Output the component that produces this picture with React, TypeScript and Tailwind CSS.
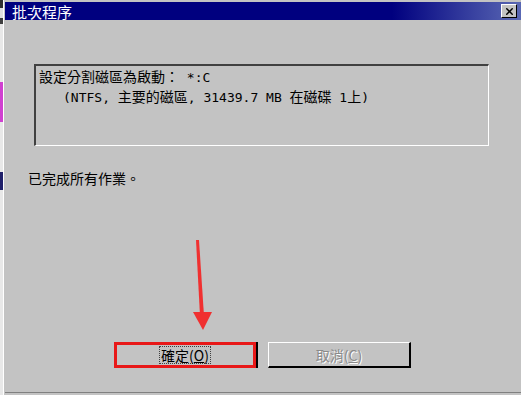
import { X } from 'lucide-react';

const font = { fontFamily: '"Noto Sans CJK TC", "Noto Sans CJK SC", sans-serif' };

function M({ children }: { children: string }) {
  return (
    <span className="text-[13px]" style={{ fontFamily: '"DejaVu Sans Mono", "Noto Sans CJK TC", monospace' }}>
      {children}
    </span>
  );
}

function LeftStrip() {
  return (
    <div className="flex w-[3px] flex-col bg-[#d8d8d8]">
      <div className="h-[8px] bg-[#303030]" />
      <div className="h-[10px] bg-[#e0e0e0]" />
      <div className="h-[6px] bg-[#404040]" />
      <div className="h-[58px] bg-[#e8e8e8]" />
      <div className="h-[40px] bg-[#d040d0]" />
      <div className="h-[50px] bg-[#e8e8e8]" />
      <div className="h-[18px] bg-[#20206a]" />
      <div className="flex-1 bg-[#e8e8e8]" />
    </div>
  );
}

function CloseButton() {
  return (
    <div className="mr-[4px] flex h-[14px] w-[16px] items-center justify-center border-t border-l border-white border-r border-b border-r-black border-b-black bg-[#c3c3c3]">
      <X className="h-[11px] w-[11px] text-black" strokeWidth={3.2} />
    </div>
  );
}

export default function App() {
  return (
    <div
      className="relative flex h-[395px] w-[521px] overflow-hidden bg-[#c3c3c3] text-black"
      style={font}
    >
      <LeftStrip />
      <div className="flex flex-1 flex-col border-l border-white pl-[1px] pt-[2px]">
        <div className="flex h-[18px] items-center justify-between bg-[linear-gradient(to_right,#00007f_0%,#00007f_75%,#5a68b4_100%)]">
          <span className="pl-[7px] text-[15px] leading-none text-white">批次程序</span>
          <CloseButton />
        </div>

        <div className="ml-[29px] mt-[44px] h-[82px] w-[455px] border-t-2 border-l-2 border-t-[#404040] border-l-[#404040] border-r border-b border-r-white border-b-white pl-[3px] pt-[1px] text-[14px] leading-[18px]">
          <div className="whitespace-pre">
            設定分割磁區為啟動：<M>{' *:C'}</M>
          </div>
          <div className="whitespace-pre pl-[24px]">
            <M>{'(NTFS, '}</M>主要的磁區<M>{', 31439.7 MB '}</M>在磁碟<M>{' 1'}</M>上<M>{')'}</M>
          </div>
        </div>

        <div className="ml-[23px] mt-[23px] text-[14px] leading-[18px]">已完成所有作業。</div>

        <div className="flex-1" />

        <div className="ml-[109px] flex gap-[12px] pb-[24px]">
          <div className="flex h-[26px] w-[142px] items-center justify-center border-[3px] border-[#e81818] bg-[#c3c3c3] shadow-[2px_0_0_#000]">
            <span className="border border-dotted border-[#404040] px-[1px] text-[14px] leading-[16px]">
              確定(<span className="underline">O</span>)
            </span>
          </div>
          <div className="flex h-[26px] w-[143px] items-center justify-center border-t border-l border-white border-r-2 border-b-2 border-r-black border-b-black bg-[#c3c3c3]">
            <span className="text-[14px] leading-[16px] text-[#8a8a8a] [text-shadow:1px_1px_0_#fff]">
              取消(<span className="underline">C</span>)
            </span>
          </div>
        </div>

        <div className="h-[3px] border-t border-t-[#808080] bg-[#c3c3c3]" />
      </div>

      <svg className="absolute left-0 top-0" width="521" height="395" viewBox="0 0 521 395">
        <polygon points="196,240 199,240 204,316 200,316" fill="#f03030" />
        <polygon points="193,312 212,312 203,330" fill="#f03030" />
      </svg>
    </div>
  );
}
